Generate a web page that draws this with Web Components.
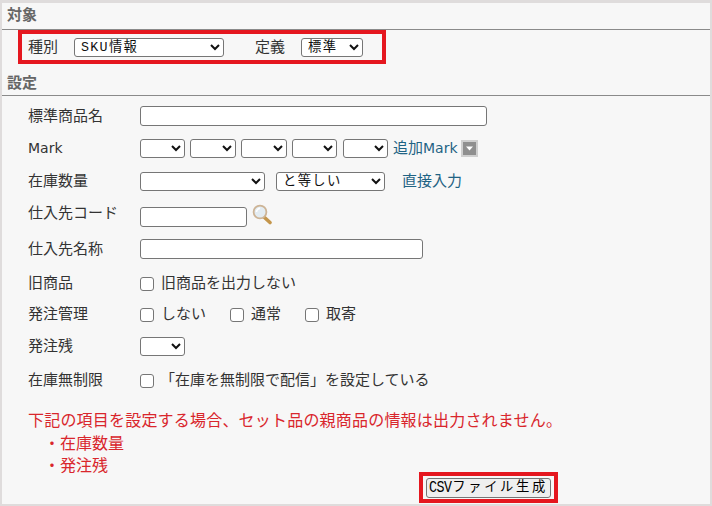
<!DOCTYPE html>
<html lang="ja">
<head>
<meta charset="utf-8">
<title>CSVファイル生成</title>
<style>
  html, body { margin: 0; padding: 0; background: #f7f7f7; }
  body { font: 15px/20px "DejaVu Sans", "Noto Sans CJK JP", sans-serif; color: #333; }
</style>
</head>
<body>
<csv-panel>
  <section-title>対象</section-title>
  <red-box style="--box-width: 368px; --box-height: 34px; --box-margin: 0 0 0 16px; --box-pad: 0 0 0 6px">
    <span style="width:46px">種別</span>
    <ui-select width="150" value="SKU情報"></ui-select>
    <span style="width:46px;margin-left:31px">定義</span>
    <ui-select width="62" value="標準"></ui-select>
  </red-box>
  <section-title style="--title-top: 7px; --title-height: 25px">設定</section-title>

  <form-row label="標準商品名" gap="5">
    <ui-text width="347"></ui-text>
  </form-row>
  <form-row label="Mark" gap="2" style="--label-size: 14px">
    <ui-select width="45" value=""></ui-select>
    <ui-select width="46" value="" style="margin-left:5px"></ui-select>
    <ui-select width="46" value="" style="margin-left:5px"></ui-select>
    <ui-select width="45" value="" style="margin-left:5px"></ui-select>
    <ui-select width="45" value="" style="margin-left:6px"></ui-select>
    <ui-link style="margin-left:5px">追加<span style="font-size:14px">Mark</span></ui-link>
    <drop-icon></drop-icon>
  </form-row>
  <form-row label="在庫数量" gap="3">
    <ui-select width="125" value=""></ui-select>
    <ui-select width="109" value="と等しい" style="margin-left:11px"></ui-select>
    <ui-link style="margin-left:17px">直接入力</ui-link>
  </form-row>
  <form-row label="仕入先コード" gap="6" label-top="-4">
    <ui-text width="107"></ui-text>
    <search-icon></search-icon>
  </form-row>
  <form-row label="仕入先名称" gap="2">
    <ui-text width="283"></ui-text>
  </form-row>
  <form-row label="旧商品" gap="4">
    <ui-check>旧商品を出力しない</ui-check>
  </form-row>
  <form-row label="発注管理" gap="1">
    <ui-check>しない</ui-check>
    <ui-check style="margin-left:24px">通常</ui-check>
    <ui-check style="margin-left:24px">取寄</ui-check>
  </form-row>
  <form-row label="発注残" gap="2">
    <ui-select width="45" value=""></ui-select>
  </form-row>
  <form-row label="在庫無制限" gap="4">
    <ui-check gap="6">「在庫を無制限で配信」を設定している</ui-check>
  </form-row>

  <note-block>
    <div style="letter-spacing:.2px">下記の項目を設定する場合、セット品の親商品の情報は出力されません。</div>
    <div class="item">・在庫数量</div>
    <div class="item">・発注残</div>
  </note-block>

  <red-box style="--box-width: 139px; --box-height: 31px; --box-margin: 0 0 0 417px; --box-pad: 0 0 0 3px">
    <ui-button><span style="display:inline-block;transform:scaleY(1.25);letter-spacing:-.6px;margin-right:1px">CSV</span>ファイル生成</ui-button>
  </red-box>
</csv-panel>

<script>
function shadow(el, html) {
  const template = document.createElement('template')
  template.innerHTML = html
  el.attachShadow({ mode: 'open' }).appendChild(template.content.cloneNode(true))
  return el.shadowRoot
}

class CsvPanel extends HTMLElement {
  constructor() {
    super()
    shadow(this, `
      <style>
        :host {
          display: block;
          box-sizing: border-box;
          width: 712px;
          height: 506px;
          overflow: hidden;
          background: #f7f7f7;
          border: solid #dfdcdc;
          border-width: 3px 2px 2px 2px;
        }
      </style>
      <slot></slot>
    `)
  }
}
customElements.define('csv-panel', CsvPanel)

class SectionTitle extends HTMLElement {
  constructor() {
    super()
    shadow(this, `
      <style>
        :host {
          display: block;
          box-sizing: border-box;
          height: var(--title-height, 27px);
          margin-top: var(--title-top, 0);
          padding: 2px 0 0 5px;
          border-bottom: 1px solid #8a8a8a;
          font-weight: 700;
          font-size: 15px;
          line-height: 20px;
          color: #666;
        }
      </style>
      <slot></slot>
    `)
  }
}
customElements.define('section-title', SectionTitle)

class RedBox extends HTMLElement {
  constructor() {
    super()
    shadow(this, `
      <style>
        :host {
          display: flex;
          align-items: center;
          box-sizing: border-box;
          width: var(--box-width);
          height: var(--box-height);
          margin: var(--box-margin);
          padding: var(--box-pad);
          border: 4px solid #e5171f;
        }
      </style>
      <slot></slot>
    `)
  }
}
customElements.define('red-box', RedBox)

class FormRow extends HTMLElement {
  constructor() {
    super()
    const gap = this.getAttribute('gap') || 0
    const labelTop = this.getAttribute('label-top') || 0
    shadow(this, `
      <style>
        :host {
          display: grid;
          grid-template-columns: 112px 1fr;
          align-items: center;
          box-sizing: border-box;
          height: 30px;
          margin-top: ${gap}px;
          padding-left: 26px;
        }
        .label { transform: translateY(${labelTop}px); font-size: var(--label-size, 15px); }
        .controls { display: flex; align-items: center; }
      </style>
      <div class="label">${this.getAttribute('label')}</div>
      <div class="controls"><slot></slot></div>
    `)
  }
}
customElements.define('form-row', FormRow)

class UiSelect extends HTMLElement {
  constructor() {
    super()
    const value = this.getAttribute('value') || ''
    shadow(this, `
      <style>
        :host { display: block; flex: none; }
        select {
          display: block;
          box-sizing: border-box;
          width: ${this.getAttribute('width')}px;
          height: 19px;
          margin: 0;
          padding: 0 0 0 2px;
          background-color: #fff;
          border: 1px solid #767676;
          border-radius: 3px;
          color: #111;
          font: 13.33px "Liberation Mono", "Noto Sans CJK JP", monospace;
          letter-spacing: 1.3px;
        }
      </style>
      <select><option>${value}</option></select>
    `)
  }
}
customElements.define('ui-select', UiSelect)

class UiText extends HTMLElement {
  constructor() {
    super()
    shadow(this, `
      <style>
        :host { display: block; flex: none; }
        input {
          display: block;
          box-sizing: border-box;
          width: ${this.getAttribute('width')}px;
          height: 20px;
          margin: 0;
          background: #fff;
          border: 1px solid #767676;
          border-radius: 3px;
        }
      </style>
      <input type="text">
    `)
  }
}
customElements.define('ui-text', UiText)

class UiCheck extends HTMLElement {
  constructor() {
    super()
    const gap = this.getAttribute('gap') || 7
    shadow(this, `
      <style>
        :host { display: inline-flex; align-items: center; flex: none; }
        input {
          appearance: none;
          box-sizing: border-box;
          width: 14px;
          height: 14px;
          margin: 1px ${gap}px 0 0;
          background: #fff;
          border: 1px solid #767676;
          border-radius: 3px;
        }
      </style>
      <input type="checkbox"><slot></slot>
    `)
  }
}
customElements.define('ui-check', UiCheck)

class UiLink extends HTMLElement {
  constructor() {
    super()
    shadow(this, `
      <style>
        :host { display: inline-block; flex: none; color: #1f6384; }
      </style>
      <slot></slot>
    `)
  }
}
customElements.define('ui-link', UiLink)

class DropIcon extends HTMLElement {
  constructor() {
    super()
    shadow(this, `
      <style>
        :host { display: block; flex: none; width: 17px; height: 17px; margin-left: 3px; }
        svg { display: block; }
      </style>
      <svg width="17" height="17" viewBox="0 0 17 17">
        <rect x="0" y="0" width="17" height="17" fill="#cfcfcf"/>
        <rect x="2" y="2" width="13" height="13" fill="#8f8f8f"/>
        <path d="M5 6.5h7L8.5 10.5z" fill="#fff"/>
      </svg>
    `)
  }
}
customElements.define('drop-icon', DropIcon)

class SearchIcon extends HTMLElement {
  constructor() {
    super()
    shadow(this, `
      <style>
        :host { display: block; flex: none; width: 21px; height: 21px; margin: -5px 0 0 5px; }
        svg { display: block; }
      </style>
      <svg width="21" height="21" viewBox="0 0 21 21">
        <path d="M12.5 13.5l5.5 5" stroke="#c4964c" stroke-width="3.6" stroke-linecap="round" fill="none"/>
        <circle cx="8" cy="8" r="6.4" fill="#e3ecf2" stroke="#cdb496" stroke-width="1.8"/>
        <path d="M4.5 8a3.6 3.6 0 0 1 3.6-3.6" stroke="#fff" stroke-width="1.6" fill="none"/>
      </svg>
    `)
  }
}
customElements.define('search-icon', SearchIcon)

class NoteBlock extends HTMLElement {
  constructor() {
    super()
    shadow(this, `
      <style>
        :host {
          display: block;
          box-sizing: border-box;
          height: 77px;
          padding: 15px 0 0 26px;
          color: #d9262c;
          font-size: 16px;
          line-height: 22.5px;
        }
        ::slotted(.item) { padding-left: 16px; }
      </style>
      <slot></slot>
    `)
  }
}
customElements.define('note-block', NoteBlock)

class UiButton extends HTMLElement {
  constructor() {
    super()
    shadow(this, `
      <style>
        :host { display: block; }
        button {
          display: block;
          box-sizing: border-box;
          width: 125px;
          height: 20px;
          margin: 0;
          padding: 0;
          background: #efefef;
          border: 1px solid #767676;
          border-radius: 3px;
          color: #000;
          font: 13.33px/16px "Liberation Mono", "Noto Sans CJK JP", monospace;
          letter-spacing: 2.6px;
          white-space: nowrap;
        }
      </style>
      <button type="button"><slot></slot></button>
    `)
  }
}
customElements.define('ui-button', UiButton)
</script>
</body>
</html>
